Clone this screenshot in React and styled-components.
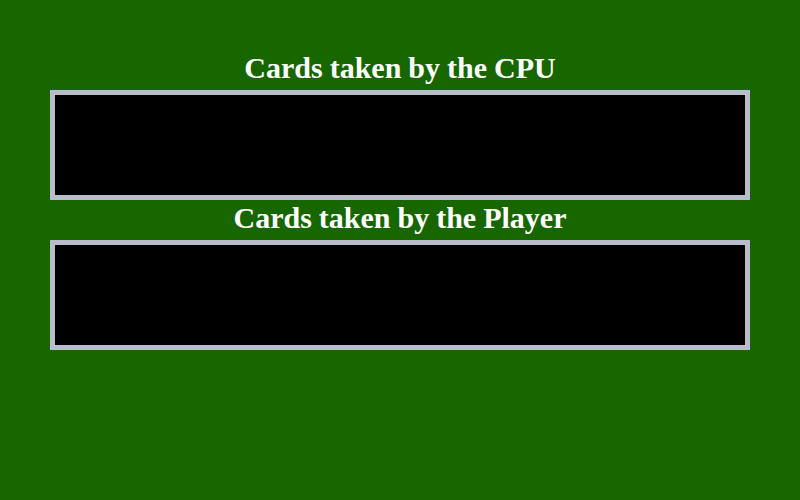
import React from 'react';
import styled, { createGlobalStyle } from 'styled-components';

const GlobalStyle = createGlobalStyle`
  html, body {
    margin: 0;
    padding: 0;
    background-color: #176600;
  }
`;

const Table = styled.div`
  width: 800px;
  height: 500px;
  background-color: #176600;
  padding: 50px 50px 0;
  box-sizing: border-box;
  display: flex;
  flex-direction: column;
  font-family: "Liberation Serif", "Times New Roman", serif;
`;

const Title = styled.h2`
  margin: 0;
  padding-bottom: 4px;
  line-height: 36px;
  color: white;
  font-size: 30px;
  font-weight: bold;
  text-align: center;
  word-spacing: -0.5px;
`;

const Pile = styled.div`
  height: 100px;
  background-color: black;
  border: 5px solid #b9bdcb;
`;

const App = () => {
  return (
    <>
      <GlobalStyle />
      <Table>
        <Title>Cards taken by the CPU</Title>
        <Pile />
        <Title>Cards taken by the Player</Title>
        <Pile />
      </Table>
    </>
  );
};

export default App;
